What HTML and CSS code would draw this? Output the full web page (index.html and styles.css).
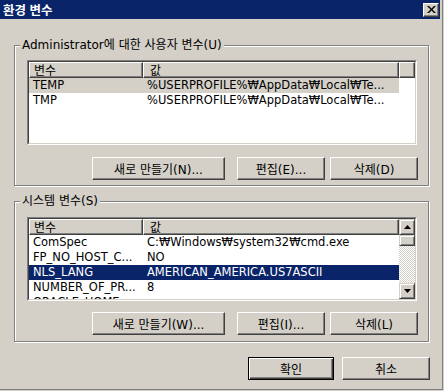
FILE: index.html
```html
<!DOCTYPE html>
<html lang="ko">
<head>
    <meta charset="UTF-8">
    <title>환경 변수</title>
    <link rel="stylesheet" href="styles.css">
</head>
<body>
    <div class="window">
        <div class="titlebar">
            <span class="title">환경 변수</span>
            <button class="close" aria-label="닫기">
                <svg width="9" height="7" viewBox="0 0 9 7"><path d="M0 0h2l2.5 2.5L7 0h2L5.5 3.5 9 7H7L4.5 4.5 2 7H0l3.5-3.5z" fill="#000"/></svg>
            </button>
        </div>

        <div class="content">
            <div class="group">
                <span class="group-label">Administrator에 대한 사용자 변수(U)</span>
                <div class="list user-list">
                    <div class="list-inner">
                        <div class="list-main">
                            <div class="head">
                                <div class="hcell c1">변수</div>
                                <div class="hcell c2">값</div>
                                <div class="hcell fill"></div>
                            </div>
                            <div class="row sel-inactive"><span class="c1">TEMP</span><span class="c2">%USERPROFILE%₩AppData₩Local₩Te...</span></div>
                            <div class="row"><span class="c1">TMP</span><span class="c2">%USERPROFILE%₩AppData₩Local₩Te...</span></div>
                        </div>
                    </div>
                </div>
                <div class="btn-row">
                    <button class="btn wide">새로 만들기(N)...</button>
                    <button class="btn edit">편집(E)...</button>
                    <button class="btn">삭제(D)</button>
                </div>
            </div>

            <div class="group system">
                <span class="group-label">시스템 변수(S)</span>
                <div class="list sys-list">
                    <div class="list-inner">
                        <div class="list-main">
                            <div class="head">
                                <div class="hcell c1">변수</div>
                                <div class="hcell c2">값</div>
                            </div>
                            <div class="row"><span class="c1">ComSpec</span><span class="c2">C:₩Windows₩system32₩cmd.exe</span></div>
                            <div class="row"><span class="c1">FP_NO_HOST_C...</span><span class="c2">NO</span></div>
                            <div class="row sel"><span class="c1">NLS_LANG</span><span class="c2">AMERICAN_AMERICA.US7ASCII</span></div>
                            <div class="row"><span class="c1">NUMBER_OF_PR...</span><span class="c2">8</span></div>
                            <div class="row"><span class="c1">ORACLE_HOME</span><span class="c2"></span></div>
                        </div>
                        <div class="scrollbar">
                            <div class="sb-btn">
                                <svg width="7" height="4" viewBox="0 0 7 4"><path d="M3.5 0L7 4H0z" fill="#000"/></svg>
                            </div>
                            <div class="sb-thumb"></div>
                            <div class="sb-track"></div>
                            <div class="sb-btn">
                                <svg width="7" height="4" viewBox="0 0 7 4"><path d="M0 0h7L3.5 4z" fill="#000"/></svg>
                            </div>
                        </div>
                    </div>
                </div>
                <div class="btn-row">
                    <button class="btn wide">새로 만들기(W)...</button>
                    <button class="btn edit">편집(I)...</button>
                    <button class="btn">삭제(L)</button>
                </div>
            </div>

            <div class="footer">
                <button class="btn ok default">확인</button>
                <button class="btn cancel">취소</button>
            </div>
        </div>
    </div>
</body>
</html>
```

FILE: styles.css
```css
:root {
    --face: #D4D0C8;
    --shadow: #808080;
    --dark: #404040;
    --navy: #0A246A;
}

* {
    box-sizing: border-box;
}

body {
    margin: 0;
    background: var(--face);
    font-family: "DejaVu Sans", "Noto Sans CJK KR", sans-serif;
    font-size: 12px;
    color: #000;
}

.window {
    width: 443px;
    height: 390px;
    padding-right: 2px;
    border-right: 1px solid var(--shadow);
    border-bottom: 1px solid var(--shadow);
}

.titlebar {
    height: 19px;
    background: var(--navy);
    display: flex;
    align-items: center;
    justify-content: space-between;
    padding: 0 1px 0 3px;
}

.title {
    color: #fff;
    font-family: "Noto Sans CJK KR", sans-serif;
    font-weight: bold;
    font-size: 12.5px;
    line-height: 19px;
}

.close {
    width: 16px;
    height: 14px;
    padding: 0;
    background: var(--face);
    border: 1px solid;
    border-color: #fff var(--dark) var(--dark) #fff;
    box-shadow: inset -1px -1px 0 var(--shadow);
    display: flex;
    align-items: center;
    justify-content: center;
}

.content {
    padding: 26px 11px 0 14px;
}

/* group boxes */

.group {
    position: relative;
    width: 415px;
    border: 1px solid var(--shadow);
    box-shadow: inset 1px 1px 0 #fff, 1px 1px 0 #fff;
    padding: 14px 10px 5px 12px;
}

.group.system {
    margin-top: 15px;
    padding-top: 15px;
    padding-bottom: 6px;
}

.group-label {
    position: absolute;
    top: -9px;
    left: 5px;
    padding: 0 2px;
    background: var(--face);
    line-height: 16px;
    white-space: nowrap;
}

/* list views */

.list {
    width: 390px;
    background: #fff;
    border: 1px solid;
    border-color: var(--shadow) #fff #fff var(--shadow);
}

.user-list {
    height: 85px;
}

.sys-list {
    height: 84px;
}

.list-inner {
    height: 100%;
    display: flex;
    border: 1px solid;
    border-color: var(--dark) var(--face) var(--face) var(--dark);
    overflow: hidden;
}

.list-main {
    flex: 1;
    overflow: hidden;
}

.head {
    display: flex;
    height: 16px;
}

.hcell {
    height: 16px;
    background: var(--face);
    border: 1px solid;
    border-color: #fff var(--dark) var(--dark) #fff;
    box-shadow: inset -1px -1px 0 var(--shadow);
    line-height: 14px;
    padding-left: 4px;
    font-family: "Noto Sans CJK KR", sans-serif;
    font-size: 12px;
}

.hcell.c1 {
    width: 114px;
}

.hcell.c2 {
    width: 256px;
    padding-left: 6px;
}

.hcell.fill {
    flex: 1;
}

.row {
    display: flex;
    width: 370px;
    height: 15px;
    line-height: 15px;
    white-space: nowrap;
    font-size: 11.5px;
}

.row span {
    overflow: hidden;
    padding-left: 4px;
}

.row .c1 {
    width: 114px;
}

.row .c2 {
    width: 256px;
}

.row.sel-inactive {
    background: var(--face);
}

.row.sel {
    background: var(--navy);
    color: #fff;
}

/* scrollbar */

.scrollbar {
    width: 16px;
    display: flex;
    flex-direction: column;
}

.sb-btn,
.sb-thumb {
    background: var(--face);
    border: 1px solid;
    border-color: var(--face) var(--dark) var(--dark) var(--face);
    box-shadow: inset 1px 1px 0 #fff, inset -1px -1px 0 var(--shadow);
}

.sb-btn {
    height: 16px;
    display: flex;
    align-items: center;
    justify-content: center;
}

.sb-thumb {
    height: 11px;
}

.sb-track {
    flex: 1;
    background: repeating-conic-gradient(var(--face) 0 25%, #fff 0 50%) 0 0 / 2px 2px;
}

/* buttons */

.btn-row {
    display: flex;
    justify-content: flex-end;
    margin-top: 12px;
}

.system .btn-row {
    margin-top: 11px;
}

.btn {
    width: 88px;
    height: 23px;
    padding: 0;
    background: var(--face);
    border: 1px solid;
    border-color: #fff var(--dark) var(--dark) #fff;
    box-shadow: inset -1px -1px 0 var(--shadow);
    font-family: "DejaVu Sans", "Noto Sans CJK KR", sans-serif;
    font-size: 12px;
    color: #000;
}

.btn.wide {
    width: 133px;
    margin-right: 12px;
}

.btn.edit {
    margin-right: 5px;
}

.footer {
    display: flex;
    justify-content: flex-end;
    gap: 8px;
    margin-top: 15px;
    margin-right: -1px;
}

.btn.ok {
    width: 86px;
}

.btn.default {
    border-color: #000;
    box-shadow: inset 1px 1px 0 #fff, inset -1px -1px 0 var(--dark), inset -2px -2px 0 var(--shadow);
}
```
